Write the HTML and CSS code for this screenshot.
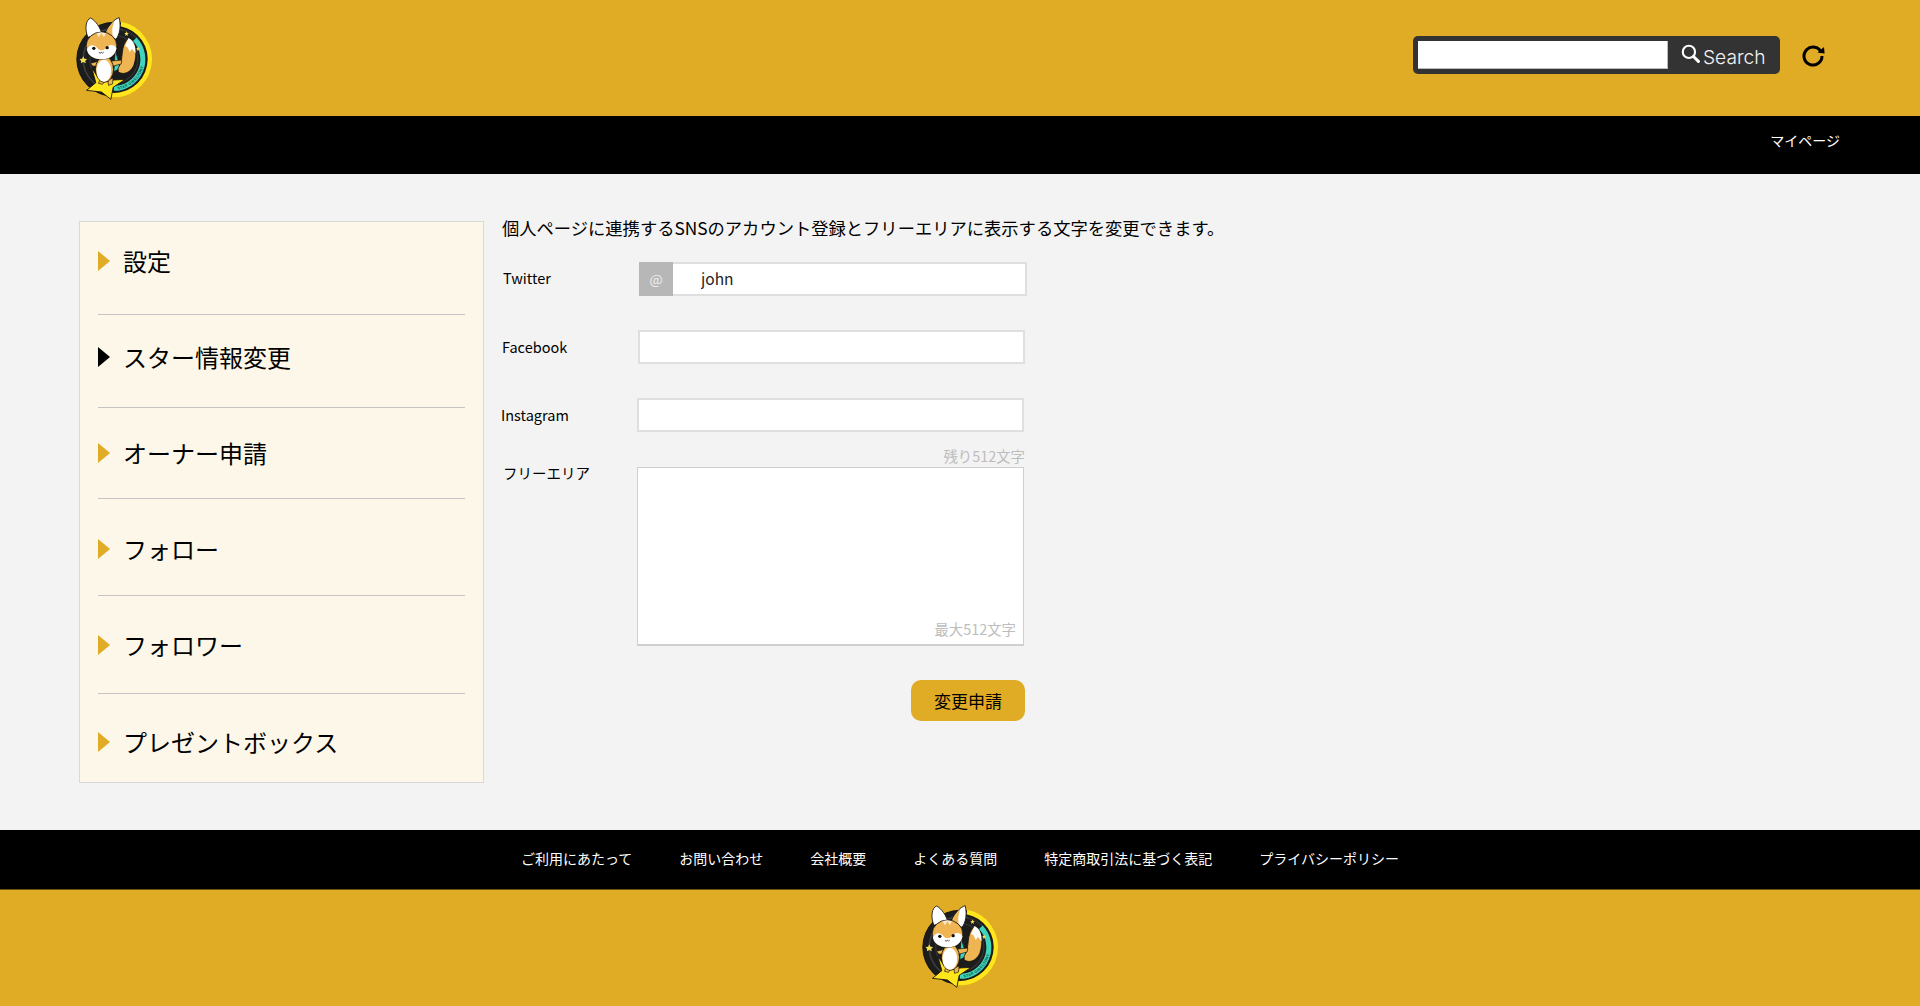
FILE: index.html
```html
<!DOCTYPE html>
<html lang="ja">
<head>
<meta charset="utf-8">
<title>スター情報変更</title>
<link rel="stylesheet" href="styles.css">
</head>
<body>
<svg class="defs" width="0" height="0" aria-hidden="true">
  <symbol id="logo-art" viewBox="70 45 245 258">
    <circle cx="192" cy="178" r="111" fill="#1c1c1c" stroke="#111" stroke-width="3"/>
    <circle cx="192" cy="178" r="92" fill="none" stroke="#3c3c3c" stroke-width="5"/>
    <circle cx="192" cy="178" r="72" fill="none" stroke="#333" stroke-width="4"/>
    <path d="M213 72A107 107 0 0 1 172 283" fill="none" stroke="#ffe61c" stroke-width="13"/>
    <path d="M218 88A95 95 0 0 1 178 272" fill="none" stroke="#111" stroke-width="2"/>
    <path d="M255 118A87 87 0 0 1 192 265" fill="none" stroke="#3fd4bb" stroke-width="15"/>
    <polygon points="100,169 104,176 112,177 106,183 108,190 100,186 93,190 94,183 89,177 97,176" fill="#f3df55"/>
    <polygon points="230,94 232,99 237,100 233,103 234,108 230,105 226,108 227,103 223,100 228,99" fill="#f3df55"/>
    <polygon points="265,140 267,144 271,145 268,148 269,152 265,150 261,152 262,148 259,145 263,144" fill="#f3df55"/>
    <path d="M196 150L212 205L192 215Z" fill="#3fd4bb" stroke="#111" stroke-width="2"/>
    <path d="M205 205C225 172 208 142 236 114C258 126 264 162 252 196C242 218 222 226 205 216Z" fill="#efb552" stroke="#111" stroke-width="2.5"/>
    <path d="M226 138L236 114C254 124 258 140 257 160L246 146L240 156L233 142Z" fill="#fff"/>
    <path d="M126 205L146 234L163 245L192 240L226 238L190 262L183 298L155 276L110 271L138 248Z" fill="#ffe61c" stroke="#111" stroke-width="2.5" stroke-linejoin="round"/>
    <path d="M122 190L145 184L150 200L128 198Z" fill="#efb552" stroke="#111" stroke-width="2"/>
    <path d="M178 184L216 180L214 192L184 200Z" fill="#efb552" stroke="#111" stroke-width="2"/>
    <path d="M150 238L146 250L158 253L166 240ZM174 240L176 256L188 252L190 234Z" fill="#efb552" stroke="#111" stroke-width="2"/>
    <ellipse cx="164" cy="208" rx="27" ry="39" fill="#efb552" stroke="#111" stroke-width="2.5"/>
    <ellipse cx="162" cy="212" rx="22" ry="33" fill="#fff"/>
    <path d="M114 112C104 85 108 60 122 54C138 62 150 82 156 100Z" fill="#fff" stroke="#111" stroke-width="2.5"/>
    <path d="M168 98C176 76 192 58 208 53C214 78 210 104 198 118Z" fill="#fff" stroke="#111" stroke-width="2.5"/>
    <path d="M168 98C176 80 186 70 194 64C186 80 186 100 190 112Z" fill="#efb552"/>
    <ellipse cx="155" cy="137" rx="46" ry="41" fill="#efb552" stroke="#111" stroke-width="2.5"/>
    <path d="M111 148C122 130 134 134 146 148C152 152 160 152 166 146C176 134 190 130 200 144C198 166 178 178 155 178C132 178 114 168 111 148Z" fill="#fff"/>
    <path d="M140 100L147 112L155 100L162 112L169 100C160 96 148 96 140 100Z" fill="#fff" opacity=".7"/>
    <circle cx="132" cy="145" r="5" fill="#111"/>
    <circle cx="172" cy="143" r="5" fill="#111"/>
    <path d="M147 157Q152 163 154 156Q157 163 162 156" fill="none" stroke="#111" stroke-width="2"/>
  </symbol>
</svg>

<header class="top">
  <svg class="logo" viewBox="70 45 245 258"><use href="#logo-art" x="70" y="45" width="245" height="258"/><path id="arc-a" d="M196 269A91 91 0 0 0 283 178" fill="none"/><text class="logo-text"><textPath href="#arc-a" startOffset="8">STAR DIRECTORY</textPath></text></svg>
  <div class="tools">
    <form class="search">
      <input class="search-input" type="text" aria-label="Search">
      <span class="search-btn">
        <svg class="search-icon" viewBox="0 0 18 18"><circle cx="7.5" cy="7.5" r="5.8" fill="none" stroke="#fff" stroke-width="2"/><path d="M11.8 11.8L16.5 16.5" stroke="#fff" stroke-width="2.8" stroke-linecap="round"/></svg>
        <span class="search-label">Search</span>
      </span>
    </form>
    <svg class="refresh" viewBox="0 0 24 24"><path d="M20.4 9.8A9 9 0 1 0 21 13" fill="none" stroke="#000" stroke-width="3"/><path d="M16.5 9.6L23.6 10.6L23 4Z" fill="#000"/></svg>
  </div>
</header>

<nav class="subnav"><a class="subnav-link">マイページ</a></nav>

<main class="main">
  <ul class="side">
    <li class="side-item"><span class="tri"></span>設定</li>
    <li class="side-item"><span class="tri tri--on"></span>スター情報変更</li>
    <li class="side-item"><span class="tri"></span>オーナー申請</li>
    <li class="side-item"><span class="tri"></span>フォロー</li>
    <li class="side-item"><span class="tri"></span>フォロワー</li>
    <li class="side-item"><span class="tri"></span>プレゼントボックス</li>
  </ul>
  <section class="content">
    <p class="lead">個人ページに連携するSNSのアカウント登録とフリーエリアに表示する文字を変更できます。</p>
    <div class="row row--tw">
      <label class="label label--up">Twitter</label>
      <div class="at-field"><span class="at">@</span><input class="at-input" type="text" value="john"></div>
    </div>
    <div class="row row--fb">
      <label class="label">Facebook</label>
      <input class="field" type="text">
    </div>
    <div class="row row--ig">
      <label class="label">Instagram</label>
      <input class="field" type="text">
    </div>
    <p class="remain">残り512文字</p>
    <div class="row row--free">
      <label class="label label--free">フリーエリア</label>
      <div class="area-wrap">
        <textarea class="area"></textarea>
        <span class="max">最大512文字</span>
      </div>
    </div>
    <div class="actions"><button class="submit" type="button">変更申請</button></div>
  </section>
</main>

<nav class="foot-links">
  <a>ご利用にあたって</a>
  <a>お問い合わせ</a>
  <a>会社概要</a>
  <a>よくある質問</a>
  <a>特定商取引法に基づく表記</a>
  <a>プライバシーポリシー</a>
</nav>
<footer class="foot">
  <svg class="logo" viewBox="70 45 245 258"><use href="#logo-art" x="70" y="45" width="245" height="258"/><path id="arc-b" d="M196 269A91 91 0 0 0 283 178" fill="none"/><text class="logo-text"><textPath href="#arc-b" startOffset="8">STAR DIRECTORY</textPath></text></svg>
</footer>
</body>
</html>
```
FILE: styles.css
```css
* { box-sizing: border-box; }
html, body { margin: 0; padding: 0; }
body {
  background: #f3f3f3;
  color: #000;
  font-family: "Noto Sans CJK JP", "Noto Sans", sans-serif;
  height: 1006px;
  overflow: hidden;
}
.defs { position: absolute; }
.logo { display: block; width: 82px; height: 86px; }
.logo-text { font: 700 11px "Liberation Sans", sans-serif; fill: #0b4f4a; letter-spacing: 1px; }

.top {
  height: 116px;
  background: #e0ab25;
  display: flex;
  justify-content: space-between;
  padding: 15px 95px 0 73px;
}
.tools { display: flex; align-items: flex-start; padding-top: 21px; }
.search {
  display: flex;
  align-items: center;
  width: 367px;
  height: 38px;
  padding: 0 0 0 5px;
  background: #333;
  border-radius: 5px;
}
.search-input {
  width: 250px;
  height: 28px;
  border: 0;
  border-bottom: 1px solid #bbb;
  border-right: 1px solid #bbb;
  background: #fff;
  padding: 0 4px;
}
.search-btn {
  display: flex;
  align-items: center;
  gap: 3px;
  margin-left: 13px;
  color: #f4f4f4;
  font: 300 19.2px Inter, sans-serif;
}
.search-label { padding-top: 3px; }
.search-icon { width: 19px; height: 19px; margin-top: -4px; }
.refresh { width: 24px; height: 24px; margin: 7px 0 0 21px; }

.subnav {
  height: 58px;
  background: #000;
  display: flex;
  justify-content: flex-end;
  padding: 10px 80px 0 0;
}
.subnav-link { color: #fff; font-size: 14px; line-height: 28px; height: 28px; }

.main { height: 656px; display: flex; align-items: flex-start; padding: 43px 0 0 79px; }
.side {
  list-style: none;
  width: 405px;
  margin: 4px 0 0;
  padding: 0 18px;
  background: #fdf7e9;
  border: 1px solid #d9d9d9;
}
.side-item {
  display: flex;
  align-items: center;
  font-size: 24px;
  line-height: 36px;
  border-bottom: 1px solid #c4c4c4;
}
.side-item:nth-child(1) { padding: 21px 0 35px; }
.side-item:nth-child(2) { padding: 24px 0 32px; }
.side-item:nth-child(3) { padding: 27px 0 27px; }
.side-item:nth-child(4) { padding: 32px 0 28px; }
.side-item:nth-child(5) { padding: 31px 0 30px; }
.side-item:nth-child(6) { padding: 30px 0 22px; border-bottom: 0; }
.tri {
  width: 0;
  height: 0;
  margin: 0 13px 0 0;
  border-style: solid;
  border-width: 10px 0 10px 12px;
  border-color: transparent transparent transparent #e0ab25;
}
.tri--on { border-left-color: #000; }

.content { width: 530px; margin-left: 18px; }
.lead { margin: 0 0 21px; width: 760px; font-size: 17.3px; line-height: 22px; padding-bottom: 2px; white-space: nowrap; }
.row { display: flex; align-items: center; height: 34px; margin-bottom: 34px; }
.row--tw { margin-left: 1px; }
.row--fb { margin-left: 0; }
.row--ig { margin-left: -1px; margin-bottom: 15px; }
.row--free { align-items: flex-start; height: auto; margin: 0 0 34px -1px; }
.label { width: 136px; font-size: 14.5px; line-height: 20px; flex: none; }
.label--up { margin-top: -2px; }
.label--free { margin-top: -4px; padding-left: 2px; }
.at-field {
  display: flex;
  width: 388px;
  height: 34px;
  border: 2px solid #dfdfdf;
  border-left: 0;
  background: #fff;
}
.at {
  width: 34px;
  margin-top: -2px;
  height: 34px;
  background: #b7b7b7;
  color: #eee;
  font-size: 14px;
  line-height: 34px;
  text-align: center;
  flex: none;
}
.at-input {
  flex: 1;
  min-width: 0;
  border: 0;
  background: transparent;
  padding: 0 0 2px 28px;
  font: 15.5px "Noto Sans CJK JP", sans-serif;
  color: #222;
  outline: 0;
}
.field {
  width: 387px;
  height: 34px;
  border: 2px solid #dfdfdf;
  background: #fff;
  padding: 0 8px;
}
.remain {
  margin: 0 0 2px;
  width: 523px;
  height: 18px;
  text-align: right;
  color: #bdbdbd;
  font-size: 14.4px;
  line-height: 18px;
}
.area-wrap { position: relative; width: 387px; height: 179px; }
.area {
  display: block;
  width: 100%;
  height: 100%;
  border: 1px solid #cfcfcf;
  border-bottom-width: 2px;
  background: #fff;
  resize: none;
  padding: 8px;
}
.max {
  position: absolute;
  right: 8px;
  bottom: 7px;
  color: #bdbdbd;
  font-size: 14.4px;
  line-height: 20px;
}
.actions { display: flex; justify-content: flex-end; width: 523px; }
.submit {
  width: 114px;
  height: 41px;
  border: 0;
  border-radius: 10px;
  background: #e0ab25;
  color: #000;
  font: 17px "Noto Sans CJK JP", sans-serif;
  padding: 0;
}

.foot-links {
  height: 59px;
  background: #000;
  display: flex;
  justify-content: center;
  gap: 47px;
  padding-top: 14px;
}
.foot-links a { color: #fff; font-size: 14px; line-height: 28px; height: 28px; }
.foot {
  height: 117px;
  background: #e0ab25;
  border-top: 1px solid #6b5210;
  display: flex;
  justify-content: center;
  padding-top: 13px;
}
```
